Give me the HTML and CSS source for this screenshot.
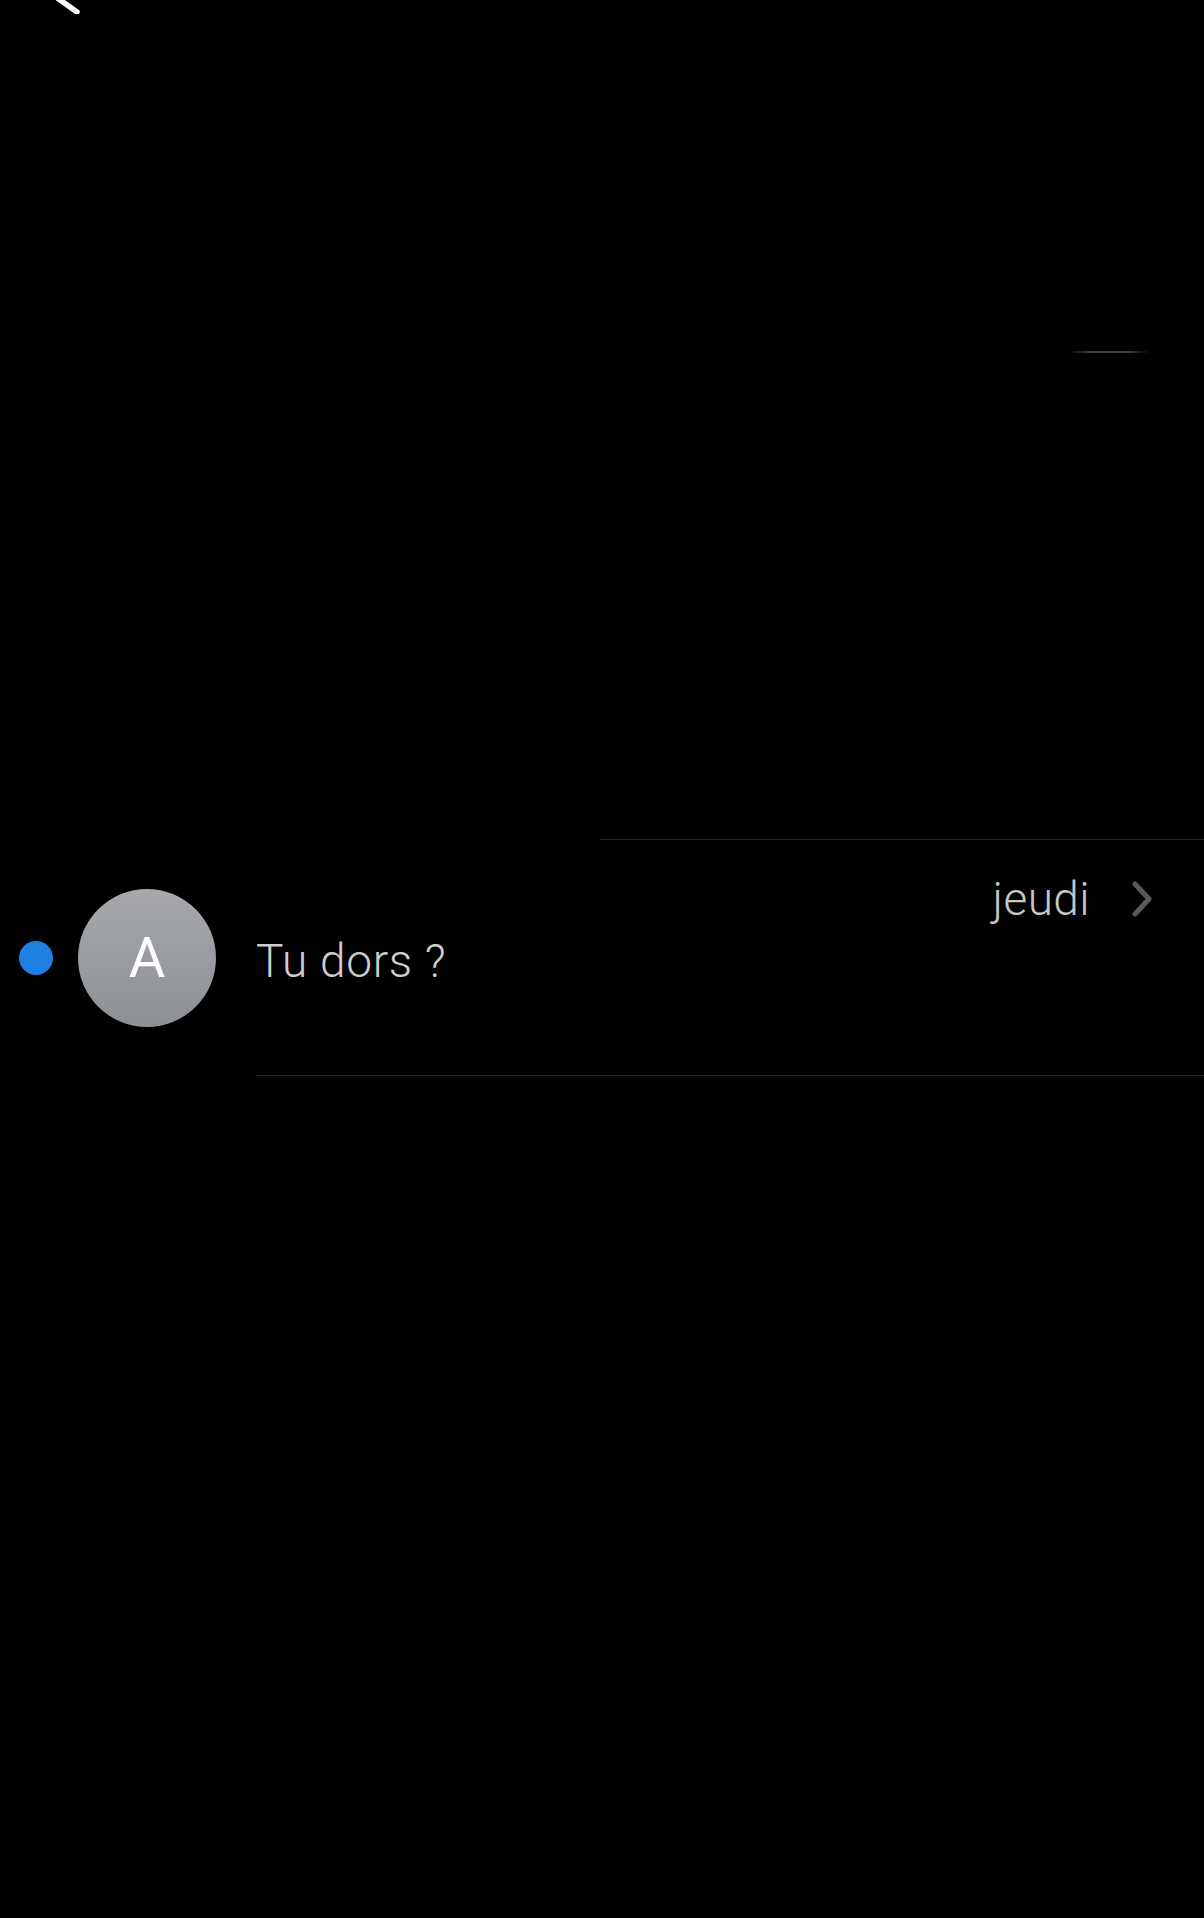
FILE: index.html
```html
<!DOCTYPE html>
<html lang="fr">
<head>
<meta charset="utf-8">
<title>Messages</title>
<link rel="stylesheet" href="styles.css">
</head>
<body>
<div class="screen">
  <header class="nav">
    <svg class="back" width="30" height="14" viewBox="0 0 30 14" aria-hidden="true">
      <line x1="4" y1="-3" x2="25" y2="12" stroke="#ffffff" stroke-width="5.5" stroke-linecap="round"/>
    </svg>
  </header>
  <div class="ghost-line"></div>
  <div class="list">
    <div class="sep-top"></div>
    <div class="row">
      <span class="unread"></span>
      <div class="avatar">A</div>
      <div class="content">
        <div class="meta">
          <span class="date">jeudi</span>
          <svg class="chev" width="22" height="36" viewBox="0 0 22 36" aria-hidden="true">
            <polyline points="4,3 18,18 4,33" fill="none" stroke="#5a5a5a" stroke-width="5" stroke-linecap="round" stroke-linejoin="round"/>
          </svg>
        </div>
        <div class="msg">Tu dors ?</div>
      </div>
    </div>
  </div>
</div>
</body>
</html>
```
FILE: styles.css
```css
html, body {
  margin: 0;
  padding: 0;
  background: #000;
}
.screen {
  width: 1204px;
  height: 1918px;
  background: #000;
  overflow: hidden;
  font-family: Roboto, "Liberation Sans", sans-serif;
}
.nav {
  height: 14px;
  overflow: hidden;
}
.back {
  display: block;
  margin-left: 52px;
}
.ghost-line {
  margin-top: 337px;
  margin-left: 1068px;
  width: 82px;
  height: 2px;
  background: linear-gradient(to right, rgba(60,60,60,0), #3a3a3a 25%, #3a3a3a 75%, rgba(60,60,60,0));
}
.list {
  margin-top: 486px;
}
.sep-top {
  height: 1px;
  margin-left: 600px;
  background: #262626;
}
.row {
  height: 236px;
  display: flex;
  align-items: stretch;
}
.unread {
  align-self: center;
  width: 34px;
  height: 34px;
  border-radius: 50%;
  background: #1f7fe3;
  margin-left: 19px;
  flex: none;
}
.avatar {
  align-self: center;
  flex: none;
  width: 138px;
  height: 138px;
  margin-left: 25px;
  border-radius: 50%;
  background: linear-gradient(to bottom, #a6a8ac, #8d9095);
  color: #fff;
  font-size: 56px;
  font-weight: 400;
  line-height: 1;
  display: flex;
  align-items: center;
  justify-content: center;
}
.content {
  flex: 1;
  margin-left: 40px;
  padding-top: 31px;
  padding-right: 51px;
  border-bottom: 1px solid #222;
}
.meta {
  height: 56px;
  display: flex;
  align-items: center;
  justify-content: flex-end;
  gap: 41px;
}
.date {
  color: #c6c6c6;
  font-size: 46px;
  font-weight: 300;
  letter-spacing: 0.4px;
  line-height: 56px;
}
.chev {
  display: block;
}
.msg {
  margin-top: 6px;
  color: #cdcdcd;
  font-size: 46px;
  font-weight: 300;
  letter-spacing: 0.7px;
  line-height: 56px;
}
```
